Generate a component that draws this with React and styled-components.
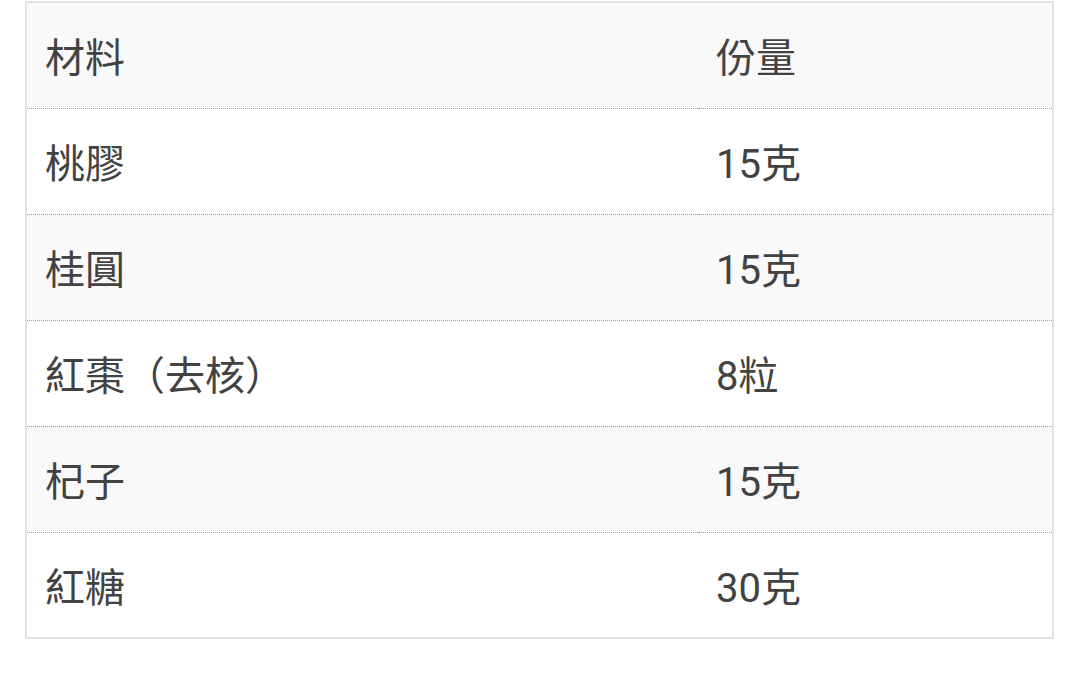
import React from 'react'
import styled, { createGlobalStyle } from 'styled-components'

const Global = createGlobalStyle`
  body {
    margin: 0;
    background: #fff;
  }
`

const rows = [
  ['桃膠', '15克'],
  ['桂圓', '15克'],
  ['紅棗（去核）', '8粒'],
  ['杞子', '15克'],
  ['紅糖', '30克'],
]

export default function App() {
  return (
    <Page>
      <Global />
      <Table>
        <thead>
          <Row $shade>
            <Cell $first>材料</Cell>
            <Cell>份量</Cell>
          </Row>
        </thead>
        <tbody>
          {rows.map(([name, amount], i) => (
            <Row key={name} $shade={i % 2 === 1} $last={i === rows.length - 1}>
              <Cell $first>{name}</Cell>
              <Cell>{amount}</Cell>
            </Row>
          ))}
        </tbody>
      </Table>
    </Page>
  )
}

const Page = styled.div`
  padding: 1px 25px;
`

const Table = styled.table`
  width: 1029px;
  border-collapse: collapse;
  border: 2px solid #e2e2e2;
  font-family: Roboto, "Noto Sans CJK TC", sans-serif;
  color: #424242;
`

const Row = styled.tr`
  background: ${p => (p.$shade ? '#f9f9f9' : '#fff')};
  border-bottom: ${p => (p.$last ? 'none' : '1px dotted #9a9a9a')};
`

const Cell = styled.td`
  height: 106px;
  padding: 0 18px;
  box-sizing: border-box;
  font-size: 40px;
  font-weight: 400;
  text-align: left;
  vertical-align: middle;
  width: ${p => (p.$first ? '672px' : 'auto')};
`
